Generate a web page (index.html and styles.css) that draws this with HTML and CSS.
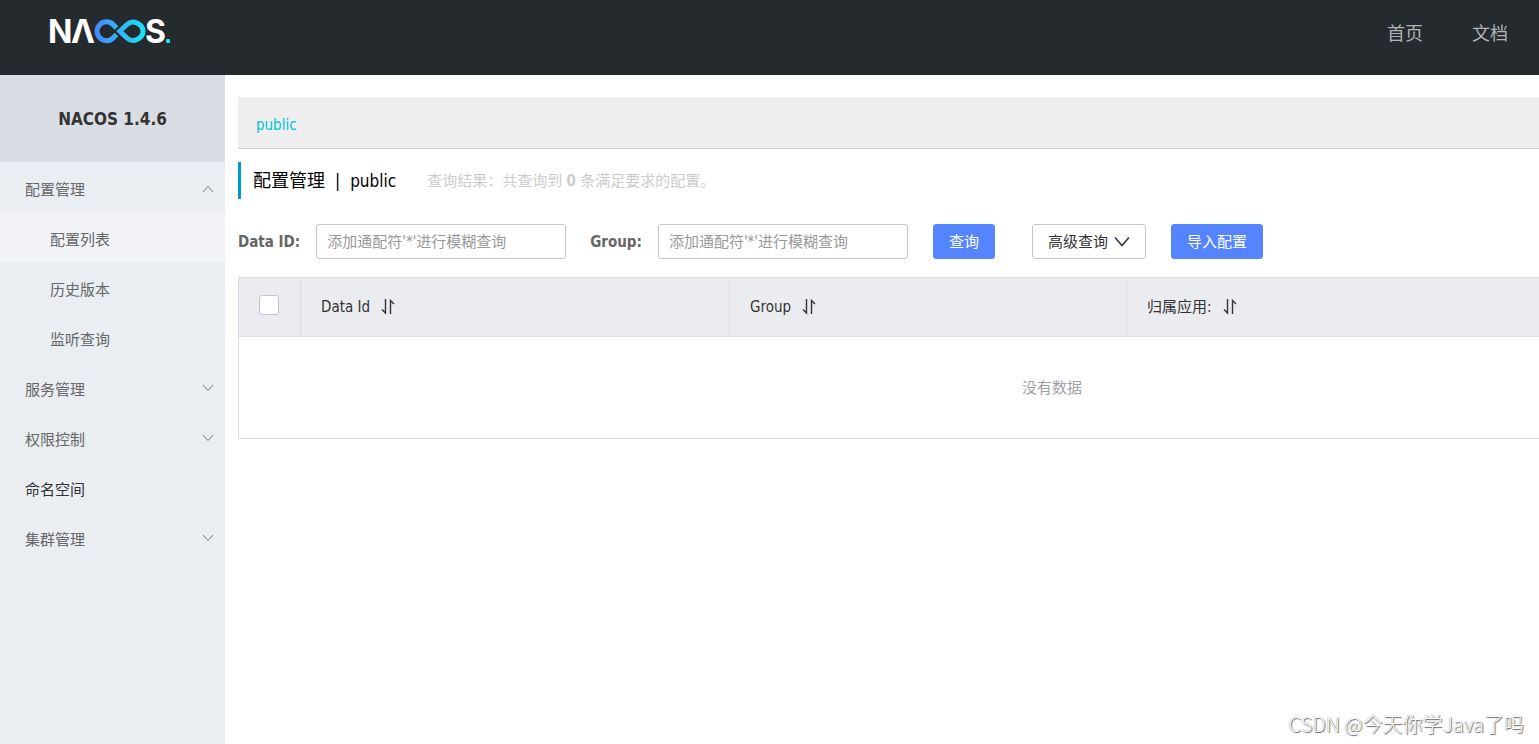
FILE: index.html
```html
<!DOCTYPE html>
<html lang="zh-CN">
<head>
<meta charset="utf-8">
<title>Nacos</title>
<link rel="stylesheet" href="styles.css">
</head>
<body>
<header class="topbar">
  <a class="logo" href="#">
    <svg width="126" height="44" viewBox="-4 -7 126 44" role="img" aria-label="NACOS">
      <defs>
        <linearGradient id="loop" gradientUnits="userSpaceOnUse" x1="45" y1="0" x2="95" y2="0">
          <stop offset="0" stop-color="#4688ff"/>
          <stop offset="1" stop-color="#19e5f5"/>
        </linearGradient>
      </defs>
      <text class="logo-text" x="-2" y="26">N</text>
      <text class="logo-text" x="21" y="26">Λ</text>
      <g fill="none" stroke="url(#loop)" stroke-width="5">
        <path d="M66.500 11 L63.500 8 A9.400 9.400 0 1 0 63.500 20.500 L66.500 17.500"/>
        <path d="M69.800 14.300 L77 7.500 C80 4.800 84 4.500 87 6 C95 9.700 95 18.800 87 22.500 C84 24 80 23.700 77 21 Z"/>
      </g>
      <text class="logo-text" x="95" y="26">S</text>
      <rect x="116" y="22" width="4" height="4" rx="1" fill="#19e5f5"/>
    </svg>
  </a>
  <nav class="topnav">
    <a href="#">首页</a>
    <a href="#">文档</a>
  </nav>
</header>
<div class="body">
  <aside class="sidebar">
    <h1 class="version">NACOS 1.4.6</h1>
    <nav class="menu">
      <button class="item" type="button" aria-expanded="true">配置管理<svg class="arrow" viewBox="0 0 12 12"><path d="M1 8 L6 2.500 L11 8"/></svg></button>
      <a class="item sub current" href="#">配置列表</a>
      <a class="item sub" href="#">历史版本</a>
      <a class="item sub" href="#">监听查询</a>
      <button class="item" type="button">服务管理<svg class="arrow" viewBox="0 0 12 12"><path d="M1 1 L6 6.500 L11 1"/></svg></button>
      <button class="item" type="button">权限控制<svg class="arrow" viewBox="0 0 12 12"><path d="M1 1 L6 6.500 L11 1"/></svg></button>
      <a class="item dark" href="#">命名空间</a>
      <button class="item" type="button">集群管理<svg class="arrow" viewBox="0 0 12 12"><path d="M1 1 L6 6.500 L11 1"/></svg></button>
    </nav>
  </aside>
  <main class="content">
    <div class="namespaces"><a href="#">public</a></div>
    <div class="title">
      <h2>配置管理</h2><span class="bar">|</span><span>public</span>
      <p class="result">查询结果：共查询到 <strong>0</strong> 条满足要求的配置。</p>
    </div>
    <form class="search">
      <label for="data-id">Data ID:</label>
      <input class="field" id="data-id" type="text" placeholder="添加通配符'*'进行模糊查询">
      <label class="second" for="group">Group:</label>
      <input class="field" id="group" type="text" placeholder="添加通配符'*'进行模糊查询">
      <button class="btn primary query" type="button">查询</button>
      <button class="btn advanced" type="button">高级查询<svg width="16" height="12" viewBox="0 0 16 12"><path d="M1 1.500 L8 9.500 L15 1.500"/></svg></button>
      <button class="btn primary" type="button">导入配置</button>
    </form>
    <table class="grid">
      <thead>
        <tr>
          <th class="c-check"><input type="checkbox" aria-label="全选"></th>
          <th class="c-id">Data Id<svg class="sort" viewBox="0 0 14 16"><path d="M4.500 0 V14 L1 10.500 M9.500 15 V1.500 L13 5"/></svg></th>
          <th class="c-group">Group<svg class="sort" viewBox="0 0 14 16"><path d="M4.500 0 V14 L1 10.500 M9.500 15 V1.500 L13 5"/></svg></th>
          <th>归属应用:<svg class="sort" viewBox="0 0 14 16"><path d="M4.500 0 V14 L1 10.500 M9.500 15 V1.500 L13 5"/></svg></th>
        </tr>
      </thead>
      <tbody>
        <tr><td colspan="4">没有数据</td></tr>
      </tbody>
    </table>
  </main>
</div>
<div class="watermark">CSDN @今天你学Java了吗</div>
</body>
</html>
```

FILE: styles.css
```css
* { box-sizing: border-box; }
body {
  margin: 0;
  min-height: 100vh;
  display: flex;
  flex-direction: column;
  position: relative;
  overflow-x: hidden;
  background: #fff;
  color: #333;
  font: 15px/20px "DejaVu Sans Condensed", "Noto Sans", "Noto Sans CJK SC", sans-serif;
}
a { color: inherit; text-decoration: none; }
button, input { font: inherit; color: inherit; }
h1, h2, p { margin: 0; }

.topbar {
  height: 75px;
  padding: 0 31px 0 46px;
  display: flex;
  justify-content: space-between;
  align-items: flex-start;
  background: #252a2f;
}
.logo { padding-top: 10px; }
.logo svg { display: block; }
.logo-text { font: 700 32px Inter, sans-serif; fill: #fff; }
.topnav {
  display: flex;
  gap: 49px;
  padding-top: 22px;
  font-size: 18px;
  line-height: 24px;
  color: #b1b3b5;
}

.body { flex: 1; display: flex; }
.sidebar { flex: 0 0 225px; background: #eaedf1; }
.version {
  height: 87px;
  background: #d9dde4;
  text-align: center;
  font-size: 17px;
  line-height: 88px;
}
.menu { display: flex; flex-direction: column; }
.item {
  height: 50px;
  padding: 6px 11px 0 25px;
  display: flex;
  align-items: center;
  justify-content: space-between;
  border: 0;
  background: none;
  color: #666;
  text-align: left;
}
.sub { padding-left: 50px; }
.current { background: #f1f3f6; }
.dark { color: #333; }
.arrow { width: 12px; height: 12px; fill: none; stroke: #777; }

.content { flex: 1; min-width: 0; padding: 22px 0 0 13px; overflow: hidden; }
.namespaces {
  height: 52px;
  padding: 18px 18px 0;
  background: #eee;
  border-bottom: 1px solid #ccc;
  color: #00c1de;
}
.title {
  height: 37px;
  margin: 13px 0 25px;
  padding-left: 12px;
  display: flex;
  align-items: center;
  border-left: 3px solid #09c;
  color: #000;
  font-size: 17px;
}
.title h2 { font-size: 18px; font-weight: 400; }
.bar { margin: 0 10px; }
.result { margin-left: 31px; font-size: 15px; color: #ccc; }

.search { display: flex; align-items: center; white-space: nowrap; }
.search label { color: #666; font-weight: 700; margin-right: 16px; }
.search .second { margin-left: 24px; }
.field {
  width: 250px;
  height: 35px;
  padding: 0 10px;
  border: 1px solid #c4c6cf;
  border-radius: 3px;
  background: #fff;
}
.field::placeholder { color: #999; opacity: 1; }
.btn {
  height: 35px;
  padding: 0 15px;
  display: flex;
  align-items: center;
  gap: 6px;
  border: 1px solid #c4c6cf;
  border-radius: 3px;
  background: #fff;
}
.btn svg { fill: none; stroke: #333; stroke-width: 1.5; }
.primary { background: #5584ff; border-color: #5584ff; color: #fff; }
.query { margin-left: 25px; }
.advanced { margin: 0 25px 0 37px; }

.grid {
  width: 100%;
  min-width: 1628px;
  margin-top: 18px;
  table-layout: fixed;
  border-collapse: collapse;
}
.grid th, .grid td { border: 1px solid #dcdee3; }
.grid th {
  height: 59px;
  padding: 0 20px;
  background: #ebecf0;
  font-weight: 400;
  text-align: left;
}
.grid td { height: 102px; padding: 0; text-align: center; color: #a0a2a8; }
.grid .c-check { width: 62px; padding-bottom: 4px; }
.c-id { width: 429px; }
.c-group { width: 397px; }
.grid input {
  display: block;
  appearance: none;
  width: 20px;
  height: 20px;
  margin: 0;
  border: 1px solid #c4c6cf;
  border-radius: 3px;
  background: #fff;
}
.sort {
  width: 14px;
  height: 16px;
  margin-left: 11px;
  vertical-align: -3px;
  fill: none;
  stroke: #333;
  stroke-width: 1.4;
}
.watermark {
  position: absolute;
  right: 15px;
  bottom: 7px;
  font: 300 20px/26px "Noto Sans CJK SC", sans-serif;
  color: #fff;
  text-shadow: 1px 1px 1px #666, 0 0 1px #888;
}
```
